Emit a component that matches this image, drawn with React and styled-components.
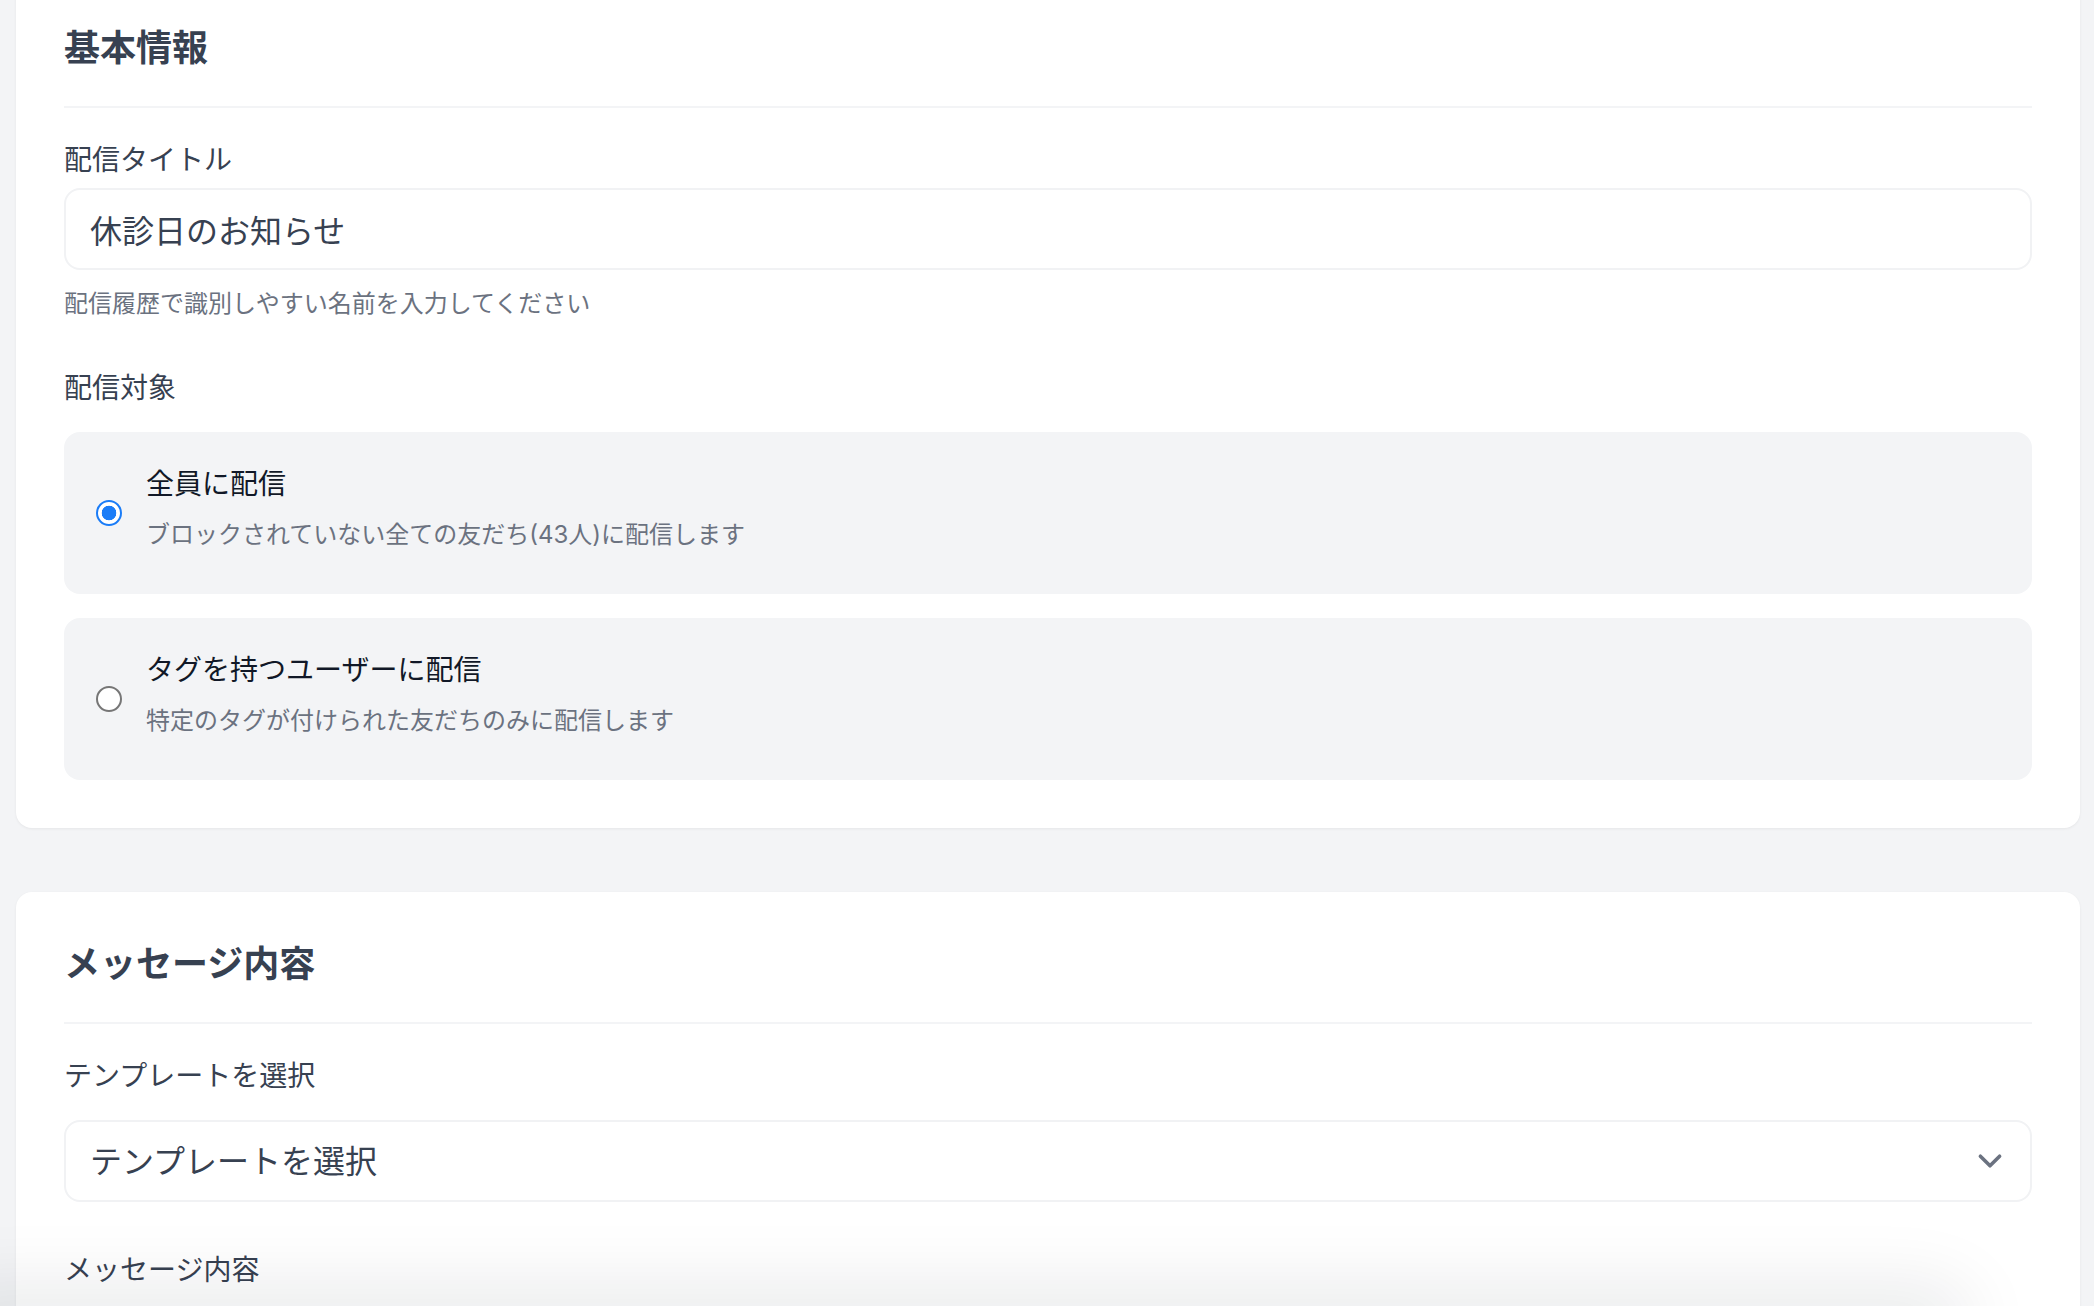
import React, { useState } from 'react';
import styled, { createGlobalStyle } from 'styled-components';

const GlobalStyle = createGlobalStyle`
  html, body {
    margin: 0;
    padding: 0;
    background: #f3f4f6;
    font-family: Inter, "Noto Sans CJK JP", "Noto Sans", sans-serif;
    -webkit-font-smoothing: antialiased;
  }
  * {
    box-sizing: border-box;
  }
`;

const Page = styled.div`
  display: flex;
  flex-direction: column;
  gap: 64px;
  margin-top: -24px;
  padding: 0 14px 120px 16px;
`;

const Card = styled.section`
  background: #ffffff;
  border-radius: 16px;
  padding: 48px;
  box-shadow: 0 1px 3px rgba(0, 0, 0, 0.06);
`;

const CardTitle = styled.h2`
  margin: 0 0 32px;
  padding-bottom: 34px;
  border-bottom: 2px solid #f3f4f6;
  font-size: 36px;
  line-height: 48px;
  font-weight: 700;
  color: #374151;
`;

const Fields = styled.div`
  display: flex;
  flex-direction: column;
  gap: 48px;
`;

const Label = styled.label`
  display: block;
  margin-bottom: ${(p) => p.$gap || 8}px;
  font-size: 28px;
  line-height: 40px;
  color: #374151;
`;

const TextInput = styled.input`
  display: block;
  width: 100%;
  height: 82px;
  padding: 0 24px;
  border: 2px solid #f1f2f4;
  border-radius: 16px;
  background: #ffffff;
  font-family: inherit;
  font-size: 32px;
  color: #374151;
  outline: none;
`;

const Help = styled.p`
  margin: 18px 0 0;
  font-size: 24px;
  line-height: 32px;
  color: #6b7280;
`;

const RadioGroup = styled.div`
  display: flex;
  flex-direction: column;
  gap: 24px;
`;

const Option = styled.label`
  display: flex;
  align-items: center;
  gap: 24px;
  height: 162px;
  padding: 32px;
  border-radius: 16px;
  background: #f3f4f6;
  cursor: pointer;
`;

const Radio = styled.input.attrs({ type: 'radio' })`
  appearance: none;
  flex: none;
  width: 26px;
  height: 26px;
  margin: 0;
  border-radius: 50%;
  border: 2px solid #767676;
  background: #ffffff;

  &:checked {
    border-color: #1a7cf7;
    background: radial-gradient(circle, #1a7cf7 0 7px, #ffffff 7.6px);
  }
`;

const OptionText = styled.div`
  padding-bottom: 11px;
`;

const OptionTitle = styled.div`
  font-size: 28px;
  line-height: 40px;
  color: #111827;
`;

const OptionDesc = styled.div`
  margin-top: 15px;
  font-size: 24px;
  line-height: 32px;
  color: #6b7280;
`;

const SelectWrap = styled.div`
  position: relative;
`;

const Select = styled.select`
  display: block;
  width: 100%;
  height: 82px;
  padding: 0 80px 0 24px;
  appearance: none;
  border: 2px solid #f1f2f4;
  border-radius: 16px;
  background: #ffffff;
  font-family: inherit;
  font-size: 32px;
  color: #374151;
  outline: none;
`;

const Chevron = styled.svg`
  position: absolute;
  top: 50%;
  right: 18px;
  width: 48px;
  height: 48px;
  transform: translateY(-50%);
  pointer-events: none;
`;

const TextArea = styled.textarea`
  display: block;
  width: 100%;
  height: 260px;
  padding: 16px 24px;
  border: 2px solid #f1f2f4;
  border-radius: 16px;
  font-family: inherit;
  font-size: 32px;
  color: #374151;
  resize: none;
`;

const BottomShade = styled.div`
  position: fixed;
  left: -60px;
  right: 130px;
  bottom: -60px;
  height: 60px;
  border-radius: 60px;
  box-shadow: 0 -14px 70px 8px rgba(17, 24, 39, 0.085);
  pointer-events: none;
`;

const targets = [
  {
    id: 'all',
    title: '全員に配信',
    desc: 'ブロックされていない全ての友だち(43人)に配信します',
  },
  {
    id: 'tag',
    title: 'タグを持つユーザーに配信',
    desc: '特定のタグが付けられた友だちのみに配信します',
  },
];

export default function App() {
  const [title, setTitle] = useState('休診日のお知らせ');
  const [target, setTarget] = useState('all');

  return (
    <>
      <GlobalStyle />
      <Page>
        <Card>
          <CardTitle>基本情報</CardTitle>
          <Fields>
            <div>
              <Label htmlFor="title">配信タイトル</Label>
              <TextInput
                id="title"
                value={title}
                onChange={(e) => setTitle(e.target.value)}
              />
              <Help>配信履歴で識別しやすい名前を入力してください</Help>
            </div>
            <div>
              <Label as="div" $gap={24}>配信対象</Label>
              <RadioGroup>
                {targets.map((t) => (
                  <Option key={t.id}>
                    <Radio
                      name="target"
                      checked={target === t.id}
                      onChange={() => setTarget(t.id)}
                    />
                    <OptionText>
                      <OptionTitle>{t.title}</OptionTitle>
                      <OptionDesc>{t.desc}</OptionDesc>
                    </OptionText>
                  </Option>
                ))}
              </RadioGroup>
            </div>
          </Fields>
        </Card>

        <Card>
          <CardTitle>メッセージ内容</CardTitle>
          <Fields>
            <div>
              <Label htmlFor="template" $gap={24}>テンプレートを選択</Label>
              <SelectWrap>
                <Select id="template" defaultValue="">
                  <option value="">テンプレートを選択</option>
                </Select>
                <Chevron viewBox="0 0 20 20" fill="none">
                  <path
                    d="M6 8l4 4 4-4"
                    stroke="#6b7280"
                    strokeWidth="1.5"
                    strokeLinecap="round"
                    strokeLinejoin="round"
                  />
                </Chevron>
              </SelectWrap>
            </div>
            <div>
              <Label htmlFor="body" $gap={24}>メッセージ内容</Label>
              <TextArea id="body" />
            </div>
          </Fields>
        </Card>
      </Page>
      <BottomShade />
    </>
  );
}
